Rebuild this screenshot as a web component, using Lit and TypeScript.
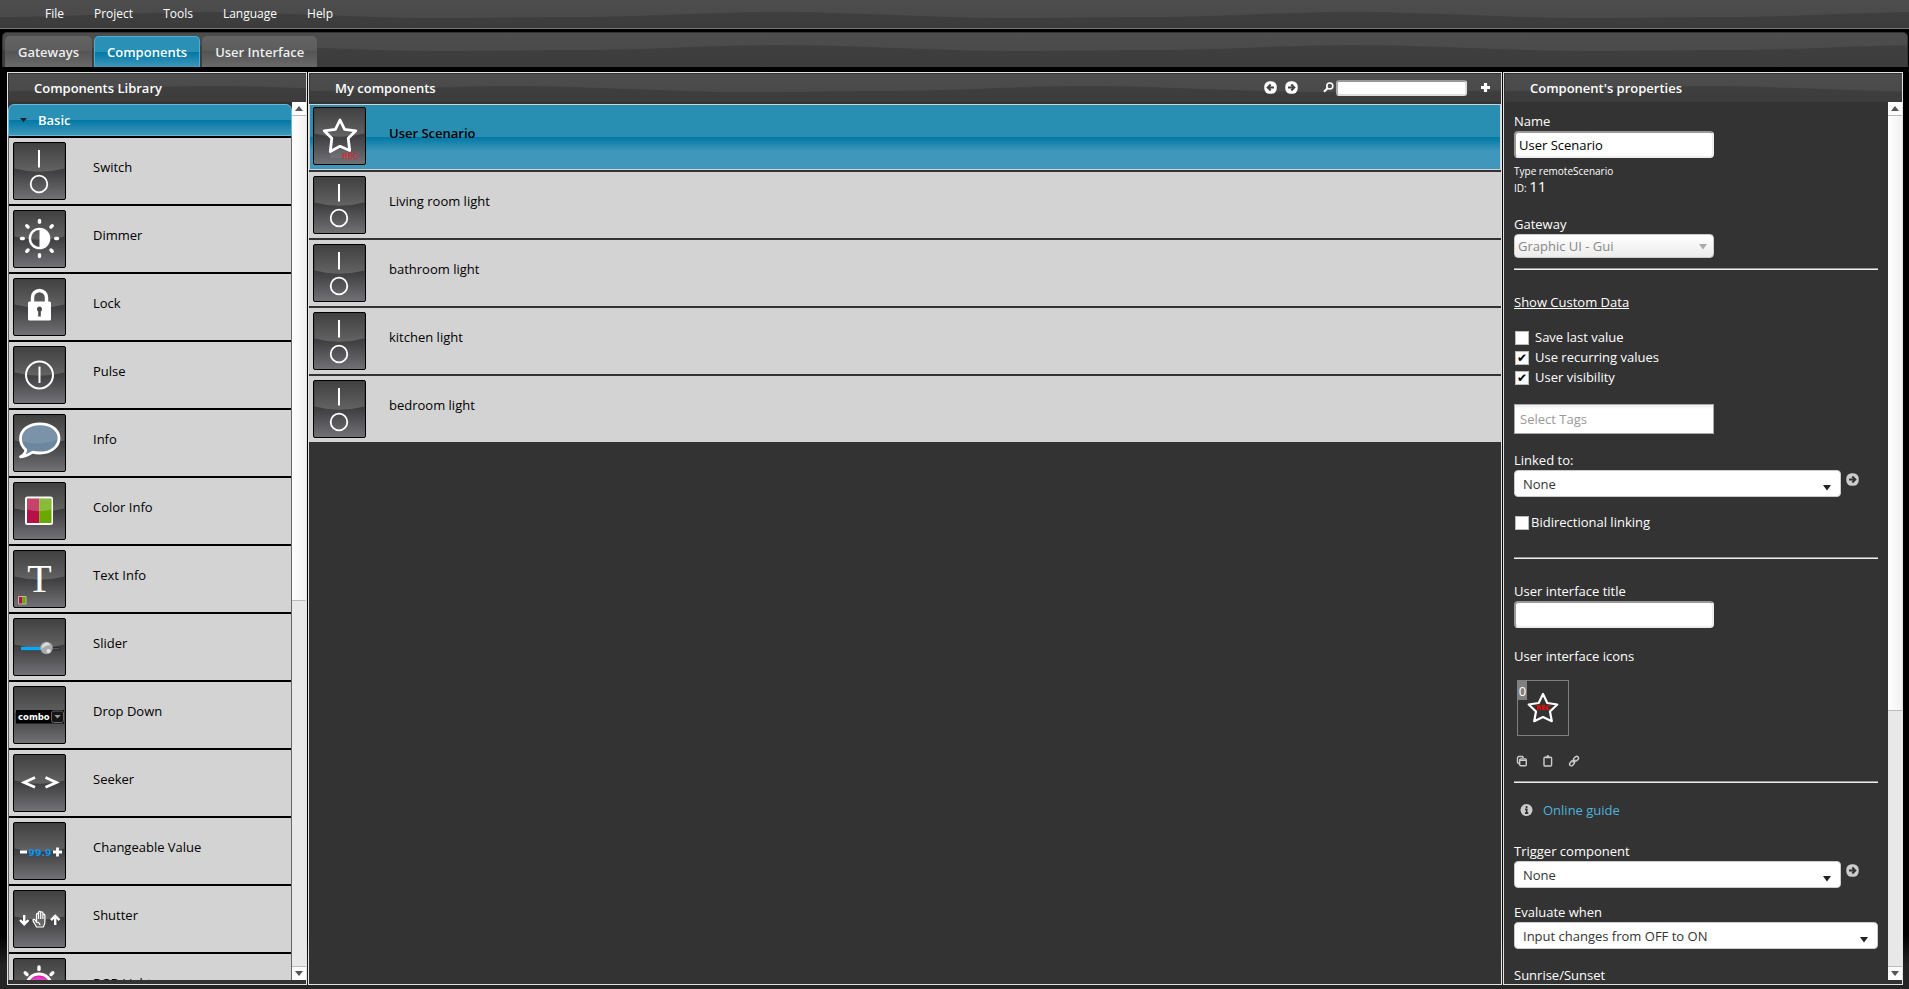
import { LitElement, html, svg, css, TemplateResult, SVGTemplateResult } from "lit";
import { customElement, property } from "lit/decorators.js";

type Glyph = SVGTemplateResult;

const sunRays = (cx: number, cy: number, from: number, to: number) =>
  [0, 45, 90, 135, 180, 225, 270, 315].map(
    (a) => svg`<line x1=${cx} y1=${cy - from} x2=${cx} y2=${cy - to} transform=${`rotate(${a} ${cx} ${cy})`}
      stroke="#fff" stroke-width="3.4" stroke-linecap="round"/>`
  );

const GLYPHS: Record<string, Glyph> = {
  switch: svg`<path d="M26 8V25.500" stroke="#fff" stroke-width="2"/><circle cx="26" cy="42" r="8.300" fill="none" stroke="#fff" stroke-width="1.800"/>`,
  dimmer: svg`${sunRays(26.5, 28.5, 16.2, 18)}<circle cx="26.500" cy="28.500" r="9.600" fill="none" stroke="#fff" stroke-width="2.400"/><path d="M26.500 19a9.500 9.500 0 0 1 0 19z" fill="#fff"/>`,
  lock: svg`<path d="M19.500 25v-5.500a7 7 0 0 1 14 0V25" fill="none" stroke="#fff" stroke-width="3.400"/><rect x="15" y="23.500" width="23" height="19" rx="1.500" fill="#fff"/><path d="M26.500 28.500a2.700 2.700 0 0 1 1.300 5v5h-2.600v-5a2.700 2.700 0 0 1 1.300-5z" fill="#4a4a4e"/>`,
  pulse: svg`<circle cx="26.500" cy="29" r="13.500" fill="none" stroke="#fff" stroke-width="2"/><path d="M26.500 20.500V37" stroke="#fff" stroke-width="2"/>`,
  info: svg`<path d="M27 9.800c11 0 19 6 19 14.400S38 39 27 39c-2.500 0-5 0-7.200-.9-3 2-6.500 4.400-12.300 4.700 3-1.600 5-3.600 5.300-7C9.300 33 7.500 29 7.500 24.600 7.500 15.800 16 9.800 27 9.800z" fill="#6c87a0" stroke="#fff" stroke-width="2.800" stroke-linejoin="round"/><path d="M9 27c0-9 8-15.500 18-15.500S44.500 17 44.500 25c-8 5-27 6-35.500 2z" fill="#fff" opacity=".1"/>`,
  color: svg`<rect x="12" y="14.500" width="28" height="28.500" rx="2.500" fill="#fff"/><path d="M14 16.500h12.200V41H14z" fill="#b80f45"/><path d="M26.200 16.500H38.500V41H26.200z" fill="#68a800"/><path d="M14 16.500h24.500v11q-12 3.600-24.500 0z" fill="#fff" opacity=".22"/>`,
  text: svg`<text x="26.500" y="42" text-anchor="middle" font-family="Liberation Serif, serif" font-size="40" fill="#fff">T</text><rect x="5" y="46" width="8.500" height="8.500" rx="1" fill="#bba"/><path d="M6 47h3.300v6.500H6z" fill="#b80f45"/><path d="M9.300 47h3.300v6.500H9.300z" fill="#68a800"/>`,
  slider: svg`<path d="M8 30.500h25" stroke="#06aaf8" stroke-width="3.200"/><rect x="36" y="29.500" width="11" height="2.400" rx="1.200" fill="#555" stroke="#222" stroke-width=".8"/><circle cx="33.500" cy="30" r="6.200" fill="#aaa"/><path d="M28.500 31q0-6 6-6.500l3 2.500q-5 0-9 4z" fill="#ddd"/><circle cx="35.500" cy="33" r="2" fill="#e2e2e2"/>`,
  combo: svg`<rect x="3" y="24" width="48" height="13.500" fill="#000"/><text x="5" y="33.500" font-family="DejaVu Sans, sans-serif" font-weight="bold" font-size="8.500" fill="#fff">combo</text><rect x="38.500" y="25" width="12" height="11.500" rx="2" fill="#151515" stroke="#666" stroke-width="1"/><path d="M41.300 29h6.400l-3.200 3.600z" fill="#999"/>`,
  seeker: svg`<path d="M22 23.500 11 28.400 22 33.300M32.500 23.500l11 4.900-11 4.900" fill="none" stroke="#fff" stroke-width="2.700"/>`,
  value: svg`<path d="M7 30h7M40 30h9M44.500 25.500v9" stroke="#fff" stroke-width="2.800"/><text x="27" y="34" text-anchor="middle" font-family="DejaVu Sans, sans-serif" font-weight="bold" font-size="9.500" fill="#0a94ee">99.9</text>`,
  shutter: svg`<path d="M11.200 25v9M7 30l4.200 4.200L15.500 30M42.200 35v-9M38 30.200l4.200-4.200 4.300 4.200" fill="none" stroke="#fff" stroke-width="2.400"/><path d="M23.500 37c-1-2.500-3-4.500-3.500-6.500-.2-1.400 1.200-1.600 2-.6l1.500 2V24.500c0-1.400 2-1.400 2 0v-2c0-1.400 2.200-1.400 2.200 0v.3c0-1.400 2.200-1.400 2.200 0V25c0-1.200 2-1.200 2 .2V32c0 2-.8 3.500-1.600 5zM25.500 24.500V29M27.700 22.500V29M29.900 24V29M23.500 32q3 .3 3.500 3" fill="#666" stroke="#fff" stroke-width="1.200"/>`,
  rgb: svg`${sunRays(26, 28.5, 17, 19.5)}<circle cx="26" cy="28.500" r="12.500" fill="#d822b8" stroke="#fff" stroke-width="3"/><path d="M17 22q9-6 18 0v4H17z" fill="#f060c8" opacity=".5"/>`,
  star: svg`<path d="M27 13l4.600 9.300 11.200 1.500-7.600 7.400 1.500 12.300L27 39.300l-9.700 5.200 1.500-13.300-7.600-7.400 11.200-1.500z" fill="none" stroke="#fff" stroke-width="2.800" stroke-linejoin="round"/><path d="M17 46l10-4 10 4v5h-20z" fill="#fff" opacity=".08"/><text x="29" y="51.500" font-family="Open Sans, sans-serif" font-size="9" font-weight="600" fill="#e0262b">REC</text>`,
};

/** Glossy dark tile carrying one component glyph. */
@customElement("component-tile")
class ComponentTile extends LitElement {
  @property() glyph = "switch";
  static styles = css`
    :host { display: block; flex: none; width: 53px; height: 58px; }
    svg { display: block; width: 100%; height: 100%; }
  `;
  render() {
    return html`<svg viewBox="0 0 53 58" aria-hidden="true">
      <defs>
        <linearGradient id="base" x1="0" y1="0" x2="0" y2="1">
          <stop offset="0" stop-color="#3c3c3c"/><stop offset=".45" stop-color="#3a3a3c"/><stop offset="1" stop-color="#727276"/>
        </linearGradient>
        <linearGradient id="gloss" x1="0" y1="0" x2="0" y2="1">
          <stop offset="0" stop-color="#414141"/><stop offset="1" stop-color="#636363"/>
        </linearGradient>
      </defs>
      <rect x=".500" y=".500" width="52" height="57" rx="1.500" fill="url(#base)" stroke="#000"/>
      <path d="M1.500 1.500h50v25q-25 6.500-50 0z" fill="url(#gloss)"/>
      ${GLYPHS[this.glyph]}
    </svg>`;
  }
}

/** Decorative vertical scroll bar; the thumb length is a share of the track. */
@customElement("scroll-rail")
class ScrollRail extends LitElement {
  @property({ type: Number }) share = 50;
  static styles = css`
    :host { display: flex; flex-direction: column; flex: none; width: 14px; background: #e8e8e8; }
    .end { height: 14px; display: grid; place-items: center; background: #fcfcfc; box-sizing: border-box; }
    .end.up { border-bottom: 1px solid #bbb; }
    .end.down { border-top: 1px solid #bbb; }
    .track { flex: 1; }
    .thumb { border-bottom: 1px solid #bbb; background: linear-gradient(90deg, #fff, #f1f1f1); box-sizing: border-box; }
    svg { display: block; }
  `;
  render() {
    return html`<div class="end up"><svg width="8" height="5"><path d="M0 5 4 0l4 5z" fill="#555"/></svg></div>
      <div class="track"><div class="thumb" style="height:${this.share}%"></div></div>
      <div class="end down"><svg width="8" height="5"><path d="M0 0h8L4 5z" fill="#555"/></svg></div>`;
  }
}

/** Repeating wavy shade laid under the content of every bar. */
const wave = html`<svg class="wave" aria-hidden="true">
  <defs><pattern id="wave" width="575" height="60" patternUnits="userSpaceOnUse">
    <path d="M0 17C70 17 130 12 205 12S360 18 430 18 520 17 575 17V60H0z" fill="#000" opacity=".16"/>
  </pattern></defs>
  <rect width="100%" height="100%" fill="url(#wave)"/></svg>`;

const arrowDisc = (dir: "left" | "right", fill: string, ink: string) => html`<svg width="13" height="13" viewBox="0 0 13 13">
  <rect x=".3" y=".3" width="12.400" height="12.400" rx="5.200" fill=${fill}/>
  <path d=${dir === "right" ? "M3 6.500h6M6.300 3.500l3 3-3 3" : "M10 6.500H4M6.700 3.500l-3 3 3 3"} fill="none" stroke=${ink} stroke-width="2"/></svg>`;

const caret = html`<svg class="caret" width="8" height="6" viewBox="0 0 8 6"><path d="M0 0h8L4 5.500z" fill="currentColor"/></svg>`;

@customElement("app-root")
class AppRoot extends LitElement {
  static styles = css`
    :host {
      display: flex; flex-direction: column; height: 100vh; min-height: 500px; overflow: hidden; box-sizing: border-box;
      background: linear-gradient(#000 0, #000 calc(100% - 54px), #232323 calc(100% - 24px), #252525 100%);
      color: #fff; font: 13px/18px "Open Sans", "Noto Sans", sans-serif;
    }
    * { box-sizing: border-box; }
    h2, ul, p { margin: 0; padding: 0; font-size: 13px; }
    ul { list-style: none; }
    button, input, select { font: inherit; margin: 0; }
    button { padding: 0; border: 0; background: none; color: inherit; }
    .band { position: relative; background: linear-gradient(#4d4d4d, #484848); }
    .band > * { position: relative; }
    .band > .wave { position: absolute; inset: 0; width: 100%; height: 100%; }

    .menu { display: flex; flex: none; height: 29px; padding: 0 0 1px 45px; gap: 30px; align-items: center; border-bottom: 1px solid #777; font-size: 12px; }
    .tabs { display: flex; flex: none; align-items: flex-end; gap: 2px; margin: 3px 1px 0 2px; height: 35px; padding-left: 2px; border: 1px solid #333; border-bottom: 0; border-radius: 5px 5px 0 0; overflow: hidden; }
    .tab { height: 31px; padding: 0 12px; border: 1px solid transparent; border-bottom: 0; border-radius: 5px 5px 0 0; background: linear-gradient(#646464, #5c5c5c 50%, #545454 50%, #6a6a6a) border-box; color: #eee; font-weight: 600; }
    .tab.on { color: #fff; border-color: #4bb0d6; background: linear-gradient(#2a90b5 50%, #0078a5 50%, #3f97bb); }

    .work { flex: 1; min-height: 0; display: grid; grid-template-columns: 300px minmax(0, 1fr) 400px; gap: 1px; padding: 5px 6px 4px 7px; }
    .panel { display: flex; flex-direction: column; min-height: 0; min-width: 0; border: 1px solid #e2e2e2; background: #333; padding-bottom: 4px; }
    .head { display: flex; flex: none; align-items: center; height: 29px; padding: 0 11px 1px 25px; border-left: 1px solid #333; border-top: 1px solid #333; }
    .head h2 { flex: 1; font-weight: 600; }
    .body { flex: 1; min-height: 0; display: flex; }
    .scroll { flex: 1; min-width: 0; overflow: hidden; }

    .library { padding-top: 2px; }
    .group { display: flex; align-items: center; width: 100%; height: 32px; padding: 0 11px; gap: 11px; border: 1px solid #6bb8d6; border-radius: 6px 6px 0 0; background: linear-gradient(#2a90b5 50%, #0078a5 50%, #3f97bb); color: #fff; font-weight: 600; }
    .group svg { color: #222; }
    .items { display: grid; gap: 2px; border: solid #666; border-width: 0 1px; background: #000; padding-top: 2px; }
    .row { display: flex; height: 66px; padding: 4px; gap: 27px; background: #d3d3d3; color: #000; }
    .row span { padding-top: 16px; }

    .mine { display: grid; gap: 2px; padding-top: 2px; }
    .mine .row { gap: 23px; }
    .mine .row.on { border: 1px solid #d3d3d3; padding: 2px 3px; background: linear-gradient(#288fb3 50%, #0078a5 50%, #3f97bb 72%); font-weight: 600; }
    .mine .row.on span { padding-top: 17px; }
    .tools { display: flex; align-items: center; }
    .tools button { display: block; height: 13px; }
    .tools svg { display: block; }
    .back { margin-right: 8px; }
    .fwd { margin-right: 25px; }
    .find { width: 131px; height: 16px; margin: 0 14px 0 2px; padding: 0 4px; border: 2px solid #999; border-color: #999 #ddd #ddd #aaa; border-radius: 3px; background: #fff; color: #000; }

    .form { padding: 11px 10px 0 10px; }
    .form label, .form .cap { display: block; line-height: 17px; padding-bottom: 1px; }
    .text { display: block; width: 200px; height: 27px; padding: 0 3px; border: 2px solid #999; border-color: #999 #eee #eee #999; border-radius: 4px; background: #fff; color: #000; }
    .type { margin-top: 6px; font-size: 10px; line-height: 14px; }
    .ident { font-size: 10px; line-height: 20px; }
    .ident b { font-size: 15px; font-weight: 400; line-height: 1; }
    .pick { position: relative; display: block; flex: 1; }
    .pick select { display: block; width: 100%; height: 27px; padding: 0 8px; appearance: none; border: 1px solid #ccc; border-radius: 4px; background: #fff; color: #333; }
    .pick .caret { position: absolute; right: 10px; top: 15px; color: #222; pointer-events: none; }
    .pick.off { width: 200px; }
    .pick.off select { height: 24px; padding: 0 3px; background: linear-gradient(#fff, #ececec); color: #888; opacity: 1; }
    .pick.off .caret { right: 7px; top: 10px; color: #aaa; }
    hr { height: 2px; margin: 0; border: 0; border-top: 1px solid #9a9a9a; background: #eee; }
    .link { display: block; width: max-content; color: #fff; line-height: 17px; padding-bottom: 1px; text-decoration: underline; }
    .s10 { margin-top: 10px; } .s16 { margin-top: 16px; } .s18 { margin-top: 18px; } .s20 { margin-top: 20px; } .s24 { margin-top: 24px; }
    .form .check { display: flex; align-items: center; gap: 6px; height: 20px; padding-left: 1px; }
    .form .check.tight { gap: 2px; }
    .check input { appearance: none; width: 14px; height: 14px; border: 1px solid #bbb; background: #fff; display: grid; place-items: center; }
    .check input:checked::before { content: "✔"; color: #000; font: 12px/12px "DejaVu Sans", sans-serif; }
    .tags { display: block; width: 200px; height: 30px; padding: 0 5px; border: 1px solid #aaa; background: linear-gradient(#eee, #fff 15%); color: #000; font-size: 13px; }
    .tags::placeholder { color: #999; opacity: 1; }
    .pair { display: flex; gap: 5px; }
    .pair > button { width: 13px; height: 13px; margin: 3px 19px 0 0; }
    .pair > button svg { display: block; }
    .thumbbox { position: relative; width: 52px; height: 56px; margin: 14px 0 0 3px; border: 1px solid #808080; }
    .thumbbox svg { display: block; }
    .thumbbox span { position: absolute; left: 0; top: 0; width: 9px; height: 19px; line-height: 20px; background: #808080; text-align: center; }
    .acts { display: flex; gap: 14px; height: 14px; margin: 18px 0 13px 2px; align-items: center; }
    .acts button, .acts svg { display: block; width: 12px; height: 12px; }
    .guide { display: flex; gap: 10px; align-items: center; padding-left: 6px; }
    .guide a { color: #4fb2dc; text-decoration: none; }
    .guide svg { display: block; }
  `;

  library: [string, string][] = [
    ["switch", "Switch"], ["dimmer", "Dimmer"], ["lock", "Lock"], ["pulse", "Pulse"], ["info", "Info"],
    ["color", "Color Info"], ["text", "Text Info"], ["slider", "Slider"], ["combo", "Drop Down"],
    ["seeker", "Seeker"], ["value", "Changeable Value"], ["shutter", "Shutter"], ["rgb", "RGB Light"],
  ];

  mine: [string, string][] = [
    ["star", "User Scenario"], ["switch", "Living room light"], ["switch", "bathroom light"],
    ["switch", "kitchen light"], ["switch", "bedroom light"],
  ];

  picker(id: string, label: string, value: string, jump: boolean): TemplateResult {
    const box = html`<div class="pick"><select id=${id}><option>${value}</option></select>${caret}</div>`;
    return html`<label for=${id}>${label}</label>${jump
      ? html`<div class="pair">${box}<button aria-label="Open ${label}">${arrowDisc("right", "#ccc", "#333")}</button></div>`
      : box}`;
  }

  render() {
    return html`
      <nav class="menu band">${wave}${["File", "Project", "Tools", "Language", "Help"].map((m) => html`<button>${m}</button>`)}</nav>
      <div class="tabs band">${wave}
        ${["Gateways", "Components", "User Interface"].map((t, i) => html`<button class="tab ${i === 1 ? "on" : ""}">${t}</button>`)}
      </div>
      <main class="work">
        <section class="panel">
          <header class="head band">${wave}<h2>Components Library</h2></header>
          <div class="body">
            <div class="scroll library">
              <button class="group"><svg width="7" height="4"><path d="M0 0h7L3.500 4z" fill="currentColor"/></svg>Basic</button>
              <ul class="items">${this.library.map(([g, n]) => html`<li class="row"><component-tile glyph=${g}></component-tile><span>${n}</span></li>`)}</ul>
            </div>
            <scroll-rail share="57"></scroll-rail>
          </div>
        </section>
        <section class="panel">
          <header class="head band">${wave}<h2>My components</h2>
            <div class="tools">
              <button class="back" aria-label="Back">${arrowDisc("left", "#fff", "#444")}</button>
              <button class="fwd" aria-label="Forward">${arrowDisc("right", "#fff", "#444")}</button>
              <label for="find" aria-label="Search"><svg width="11" height="11" viewBox="0 0 11 11"><circle cx="6.800" cy="4" r="3" fill="none" stroke="#fff" stroke-width="1.600"/><path d="M4.600 6.200 1 9.700" stroke="#fff" stroke-width="2.200"/></svg></label>
              <input class="find" id="find" type="text">
              <button aria-label="Add"><svg width="9" height="13" viewBox="0 0 9 13"><path d="M0 6.500h9M4.500 2v9" stroke="#fff" stroke-width="3.200"/></svg></button>
            </div>
          </header>
          <div class="body"><div class="scroll">
            <ul class="mine">${this.mine.map(([g, n], i) => html`<li class="row ${i === 0 ? "on" : ""}"><component-tile glyph=${g}></component-tile><span>${n}</span></li>`)}</ul>
          </div></div>
        </section>
        <section class="panel">
          <header class="head band">${wave}<h2>Component's properties</h2></header>
          <div class="body">
            <div class="scroll form">
              <label for="name">Name</label>
              <input class="text" id="name" type="text" value="User Scenario">
              <p class="type">Type remoteScenario</p>
              <p class="ident">ID: <b>11</b></p>
              <label class="s18" for="gateway">Gateway</label>
              <div class="pick off"><select id="gateway" disabled><option>Graphic UI - Gui</option></select>${caret}</div>
              <hr class="s10">
              <div class="s24"><a class="link" href="#">Show Custom Data</a></div>
              <div class="s16">
                <label class="check"><input type="checkbox">Save last value</label>
                <label class="check"><input type="checkbox" checked>Use recurring values</label>
                <label class="check"><input type="checkbox" checked>User visibility</label>
              </div>
              <input class="tags s16" type="text" placeholder="Select Tags" aria-label="Tags">
              <div class="s18">${this.picker("linked", "Linked to:", "None", true)}</div>
              <div class="s16"><label class="check tight"><input type="checkbox">Bidirectional linking</label></div>
              <hr class="s24">
              <label class="s24" for="uititle">User interface title</label>
              <input class="text" id="uititle" type="text">
              <div class="cap s20">User interface icons</div>
              <div class="thumbbox"><svg width="50" height="54" viewBox="0 0 50 54">
                <path d="M25 13l4.300 9 10 1.500-7.300 7 1.800 9.700L25 36l-8.800 4.200L18 30.500l-7.300-7 10-1.500z" fill="none" stroke="#fff" stroke-width="2.200" stroke-linejoin="round"/>
                <text x="25" y="28.500" text-anchor="middle" font-family="DejaVu Sans, sans-serif" font-size="6.500" font-weight="bold" fill="#f00">REC</text></svg><span>0</span></div>
              <div class="acts">
                <button aria-label="Copy"><svg viewBox="0 0 12 12"><path d="M3 8.500H2.500L1.500 7.500V2.500L2.500 1.500H6.500L7.500 3" fill="none" stroke="#ccc" stroke-width="1.400"/><rect x="3.700" y="4" width="6.600" height="6.700" rx="1" fill="none" stroke="#ccc" stroke-width="1.400"/><path d="M4 5.500h6" stroke="#ccc"/></svg></button>
                <button aria-label="Paste"><svg viewBox="0 0 12 12"><rect x="2" y="2.200" width="7.600" height="8.800" rx="1" fill="none" stroke="#ccc" stroke-width="1.400"/><path d="M3.500 2.500h4.600M4.700 1h2.200" stroke="#ccc" stroke-width="1.600"/></svg></button>
                <button aria-label="Link"><svg viewBox="0 0 12 12"><rect x="5.300" y="2" width="5.400" height="3.600" rx="1.800" transform="rotate(-40 8 3.800)" fill="none" stroke="#ccc" stroke-width="1.400"/><rect x="1.300" y="6.600" width="5.400" height="3.600" rx="1.800" transform="rotate(-50 4 8.400)" fill="none" stroke="#ccc" stroke-width="1.400"/><path d="M4.500 7.500 7.500 4.700" stroke="#ccc" stroke-width="1.300"/></svg></button>
              </div>
              <hr>
              <div class="guide s18"><svg width="13" height="13" viewBox="0 0 13 13"><circle cx="6.500" cy="6" r="6" fill="#ccc"/><path d="M6.600 2v2M5 5.300h1.700v4M4.900 9.200h3.400" fill="none" stroke="#333" stroke-width="1.700"/></svg><a href="#">Online guide</a></div>
              <div class="s24">${this.picker("trigger", "Trigger component", "None", true)}</div>
              <div class="s16">${this.picker("evaluate", "Evaluate when", "Input changes from OFF to ON", false)}</div>
              <div class="s18"><div class="cap">Sunrise/Sunset</div></div>
            </div>
            <scroll-rail share="70"></scroll-rail>
          </div>
        </section>
      </main>`;
  }
}
